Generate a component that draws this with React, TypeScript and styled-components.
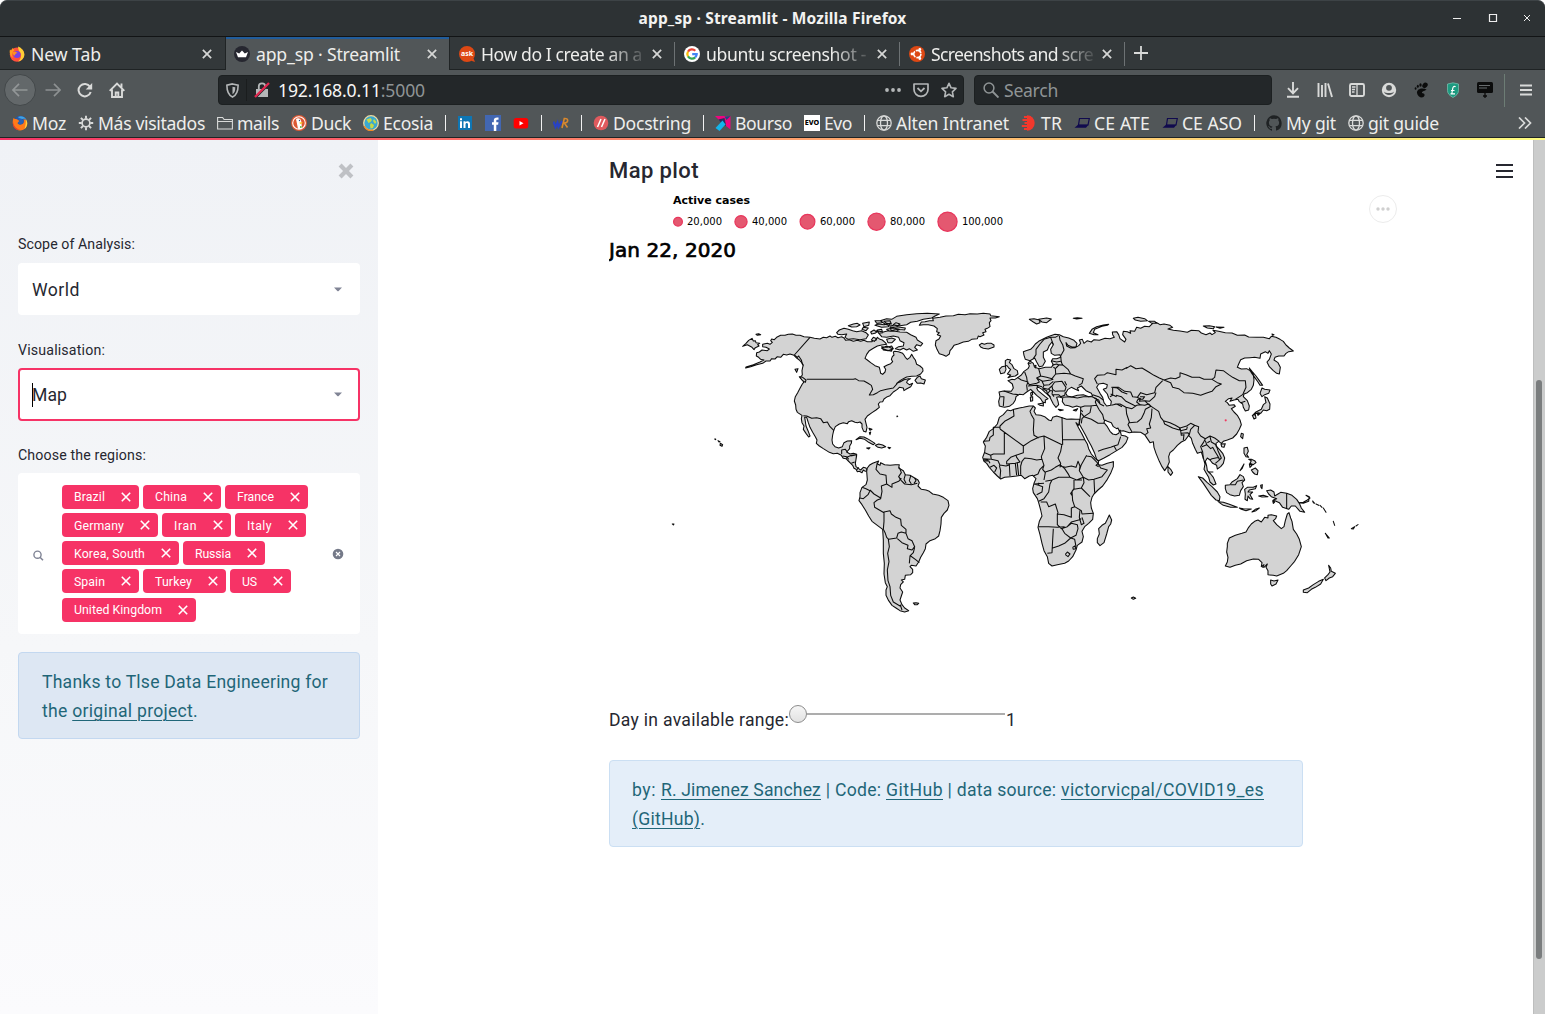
import React, { useLayoutEffect, useRef, useState } from "react";
import styled, { createGlobalStyle, css } from "styled-components";

const UI = `"Noto Sans", "Open Sans", sans-serif`;
const BODY = `Roboto, "Noto Sans", sans-serif`;

const GlobalStyle = createGlobalStyle`
  * { box-sizing: border-box; }
  body { margin: 0; overflow: hidden; background: #fff; }
  svg { display: block; flex: none; }
`;

/* ---------- text that settles on a set width ---------- */

const FitSpan = styled.span`
  display: inline-block;
  white-space: pre;
`;

function Fit({ w, children }: { w: number; children: React.ReactNode }) {
  const ref = useRef<HTMLSpanElement>(null);
  const [spacing, setSpacing] = useState(0);
  useLayoutEffect(() => {
    const el = ref.current;
    if (!el) return;
    const count = (el.textContent || " ").length;
    setSpacing((w - el.getBoundingClientRect().width) / count);
  }, [w]);
  return (
    <FitSpan ref={ref} style={{ letterSpacing: `${spacing}px` }}>
      {children}
    </FitSpan>
  );
}

/* ---------- window chrome ---------- */

const Window = styled.div`
  width: 1545px;
  height: 1014px;
  display: flex;
  flex-direction: column;
  overflow: hidden;
  background: #fff;
`;

const TitleBar = styled.header`
  height: 37px;
  flex: none;
  display: grid;
  grid-template-columns: 1fr auto 1fr;
  align-items: center;
  background: #2d3234;
  border-top: 1px solid #3d4346;
  border-bottom: 1px solid #121415;
  border-radius: 7px 7px 0 0;
  color: #f3f3f1;
  font: 700 15.5px/30px ${UI};
  padding-bottom: 2px;
`;

const WindowButtons = styled.div`
  display: flex;
  justify-content: flex-end;
  gap: 22px;
  padding: 0 12px 0 0;
  margin-top: 1px;
`;

const TabStrip = styled.nav`
  height: 33px;
  flex: none;
  display: flex;
  background: #33383a;
  border-bottom: 1px solid #1f2324;
`;

const TabBox = styled.div<{ $active?: boolean; $line?: boolean }>`
  position: relative;
  width: 225px;
  height: 32px;
  display: flex;
  align-items: center;
  padding: 1px 12px 0 9px;
  color: #eeeeec;
  font: 17.6px ${UI};
  ${(p) =>
    p.$active &&
    css`
      height: 33px;
      background: #515658;
      border-left: 1px solid #202425;
      border-right: 1px solid #202425;
      box-shadow: inset 0 2px 0 #215d9c;
      padding-left: 8px;
      padding-right: 11px;
    `}
  ${(p) =>
    p.$line &&
    css`
      &::after {
        content: "";
        position: absolute;
        right: 0;
        top: 5px;
        width: 1px;
        height: 24px;
        background: #6d7274;
      }
    `}
`;

const TabLabel = styled.div<{ $fade?: boolean }>`
  width: 163px;
  margin-left: 6px;
  overflow: hidden;
  white-space: nowrap;
  line-height: 28px;
  ${(p) =>
    p.$fade &&
    css`
      mask-image: linear-gradient(90deg, #000 125px, transparent 168px);
    `}
`;

const TabClose = styled.span`
  margin-left: 8px;
  display: flex;
`;

const NewTab = styled.div`
  display: flex;
  align-items: center;
  padding-left: 9px;
`;

const Toolbar = styled.div`
  height: 40px;
  flex: none;
  display: flex;
  align-items: center;
  background: #515658;
  padding-left: 4px;
`;

const Back = styled.div`
  width: 32px;
  height: 32px;
  border-radius: 50%;
  border: 1px solid #43484a;
  background: #63686a;
  display: grid;
  place-items: center;
`;

const NavIcons = styled.div`
  display: flex;
  gap: 16px;
  margin-left: 9px;
  width: 173px;
`;

const Field = styled.div<{ $w: number }>`
  width: ${(p) => p.$w}px;
  height: 30px;
  display: flex;
  align-items: center;
  border-radius: 4px;
  border: 1px solid #1c2021;
  background: #232729;
  color: #8f9495;
  font: 17.6px/26px ${UI};
  & + & {
    margin-left: 10px;
  }
`;

const Shield = styled.div`
  width: 28px;
  height: 22px;
  border-right: 1px solid #1a1d1e;
  display: grid;
  place-items: center;
`;

const Lock = styled.div`
  margin: 0 8px 0 7px;
`;

const Address = styled.div`
  flex: 1;
  b {
    font-weight: 400;
    color: #f6f6f5;
  }
`;

const FieldIcons = styled.div`
  display: flex;
  gap: 12px;
  align-items: center;
  padding-right: 6px;
`;

const SearchGlyph = styled.div`
  margin: 0 5px 0 8px;
`;

const Extensions = styled.div`
  display: flex;
  gap: 16px;
  align-items: center;
  margin-left: 13px;
  width: 219px;
`;

const Divider = styled.div`
  width: 1px;
  height: 33px;
  background: #6d7d75;
`;

const MenuSlot = styled.div`
  margin-left: 14px;
`;

const Bookmarks = styled.div`
  height: 28px;
  flex: none;
  display: flex;
  align-items: center;
  gap: 12px;
  padding: 0 13px 2px 12px;
  background: #515658;
  border-bottom: 1px solid #202425;
  color: #eeeeec;
  font: 17.6px ${UI};
`;

const Bookmark = styled.div<{ $w: number }>`
  width: ${(p) => p.$w}px;
  flex: none;
  display: flex;
  align-items: center;
  gap: 4px;
  white-space: nowrap;
  line-height: 24px;
`;

const Bar = styled.i`
  width: 1px;
  height: 16px;
  margin-right: -1px;
  background: #f2f2f2;
`;

const Overflow = styled.div`
  margin-left: auto;
`;

const Rainbow = styled.div`
  height: 2px;
  flex: none;
  background: linear-gradient(90deg, #f63366, #ff7468 33%, #ffb46e 60%, #fffd80);
`;

/* ---------- page ---------- */

const Page = styled.div`
  flex: 1;
  display: flex;
  min-height: 0;
  color: #262730;
  font: 17.6px ${BODY};
`;

const Sidebar = styled.aside`
  width: 378px;
  flex: none;
  padding: 0 18px;
  background: linear-gradient(180deg, #f0f2f6, #f6f7f9 58%, #fbfbfd);
`;

const CloseRow = styled.div`
  display: flex;
  justify-content: flex-end;
  height: 94px;
  padding: 23px 6px 0 0;
`;

const Label = styled.div<{ $top?: number }>`
  height: 20px;
  line-height: 20px;
  margin-top: ${(p) => p.$top ?? 0}px;
  font-size: 14.2px;
`;

const Select = styled.div<{ $focus?: boolean; $top: number }>`
  height: ${(p) => (p.$focus ? 53 : 52)}px;
  margin-top: ${(p) => p.$top}px;
  padding: 0 ${(p) => (p.$focus ? 16 : 18)}px 0 ${(p) => (p.$focus ? 12 : 14)}px;
  display: flex;
  align-items: center;
  justify-content: space-between;
  background: #fff;
  border-radius: 4px;
  border: ${(p) => (p.$focus ? "2px solid #f63366" : "0")};
`;

const Value = styled.span<{ $caret?: boolean }>`
  line-height: 24px;
  padding-top: ${(p) => (p.$caret ? 0 : 2)}px;
  box-shadow: ${(p) => (p.$caret ? "inset 1px 0 0 #000" : "none")};
`;

const Multi = styled.div`
  height: 161px;
  margin-top: 8px;
  display: flex;
  align-items: center;
  background: #fff;
  border-radius: 4px;
  padding: 0 16px 0 15px;
`;

const SearchSlot = styled.div`
  padding-top: 4px;
`;

const Tags = styled.div`
  width: 256px;
  margin-left: 18px;
  padding-bottom: 0.6px;
  display: flex;
  flex-wrap: wrap;
  gap: 4.2px 4px;
`;

const Tag = styled.div<{ $w: number }>`
  width: ${(p) => p.$w}px;
  height: 24px;
  padding: 0 8px 0 12px;
  display: flex;
  align-items: center;
  justify-content: space-between;
  border-radius: 4px;
  background: #f63366;
  color: #fff;
  font-size: 12.3px;
  line-height: 22px;
  & > span {
    padding-top: 1px;
  }
`;

const ClearSlot = styled.div`
  margin-left: auto;
`;

const Info = styled.div<{ $top: number; $side?: boolean }>`
  height: 87px;
  margin-top: ${(p) => p.$top}px;
  padding: 15px 22px 13px ${(p) => (p.$side ? 23 : 22)}px;
  border: 1px solid ${(p) => (p.$side ? "#c3d8f0" : "#cbdff3")};
  border-radius: 4px;
  background: ${(p) => (p.$side ? "#dde7f3" : "#e4eef9")};
  color: #1f6678;
  line-height: 29px;
  a {
    color: inherit;
    text-decoration: underline;
    text-decoration-thickness: 1px;
    text-underline-offset: 3px;
  }
`;

const Line = styled.div`
  height: 29px;
`;

const Main = styled.main`
  position: relative;
  flex: 1;
  padding-left: 231px;
`;

const Heading = styled.h3`
  height: 50px;
  margin: 0;
  padding-top: 16px;
  line-height: 30px;
  font-size: 22px;
  font-weight: 500;
`;

const PageMenu = styled.div`
  position: absolute;
  left: 1118px;
  top: 23px;
`;

const ChartMenu = styled.div`
  position: absolute;
  left: 991px;
  top: 55px;
  width: 28px;
  height: 28px;
  border: 1px solid #ececec;
  border-radius: 50%;
  display: grid;
  place-items: center;
`;

const SliderRow = styled.div`
  display: flex;
  align-items: center;
  height: 24px;
  margin-top: 28px;
`;

const Track = styled.div`
  width: 217px;
  height: 20px;
  margin-top: -13px;
  display: flex;
  align-items: center;
  &::after {
    content: "";
    flex: 1;
    height: 2px;
    margin-right: 1px;
    background: #adadad;
  }
`;

const Thumb = styled.i`
  width: 18px;
  height: 18px;
  border-radius: 50%;
  border: 1px solid #8c8c8c;
  background: linear-gradient(#f6f6f6, #e2e2e2);
`;

const Content = styled.div`
  width: 694px;
`;

const Scroll = styled.div`
  width: 12px;
  flex: none;
  padding: 240px 0 0 2px;
  background: #cbcccc;
  border-left: 1px solid #bdbebe;
`;

const ScrollThumb = styled.div`
  width: 6px;
  height: 579px;
  border-radius: 3px;
  background: #7a7d7e;
`;

/* ---------- icons ---------- */

const Cross = ({ size, sw, color }: { size: number; sw: number; color: string }) => (
  <svg width={size} height={size} viewBox={`0 0 ${size} ${size}`} stroke={color} strokeWidth={sw}>
    <path d={`M${sw / 2} ${sw / 2}L${size - sw / 2} ${size - sw / 2}M${size - sw / 2} ${sw / 2}L${sw / 2} ${size - sw / 2}`} />
  </svg>
);

const Ic = ({ children, s = 16 }: { children: React.ReactNode; s?: number }) => (
  <svg width={s} height={s} viewBox="0 0 16 16" fill="none">
    {children}
  </svg>
);

const light = "#d9dad9";

const FirefoxIcon = () => (
  <Ic>
    <circle cx="8" cy="8.6" r="7.2" fill="#ff4f3d" />
    <path d="M9 .5c3 1 6.5 4 6.4 8.2-.3 4-3.5 6.5-6.6 6.8C13 13 13 7 10 5 9.5 3.500 9 2 9 .5z" fill="#ffcf36" />
    <path d="M1 3.500l1.200 1L3.500 2l2 2C3 6 2.500 9 4 12 1.500 10.500 0 7 1 3.500z" fill="#ff9a1f" />
    <circle cx="8" cy="8.500" r="3.500" fill="#7542e5" />
    <path d="M3.500 6.500c2-1.500 4-.8 5 .6-1.500.2-2.500 1-2.500 2.400-1.500-.2-2.500-1.500-2.500-3z" fill="#ff9320" />
  </Ic>
);

const OldFirefoxIcon = () => (
  <Ic>
    <circle cx="8.500" cy="7.500" r="6.800" fill="#2458a8" />
    <path d="M6 2c3-1.500 6-.5 8 2-3-.8-4 .5-6 .2z" fill="#3fa3e4" />
    <path d="M1.500 3c1 1 2 1 3.500 1.300L7.500 6 5.500 8c1 2.500 4.500 2 6 0 .6-1 .4-3 0-4 4 1 5 5 2.500 8.500-3 4-9.500 4-12-.5C.3 9 .5 5.500 1.500 3z" fill="#ff7a1a" />
    <path d="M6 3.500c2.500-1 5 .5 5.200 2.500.2 2-1.700 3.600-3.600 3.300C5.500 9 6 7 7.500 6z" fill="#2b62b5" />
    <path d="M13.500 3.500c2.500 3 2.300 8-1 10.500 1-3 1.800-7 1-10.500z" fill="#ffd23b" />
    <path d="M1 6c0 4 2.500 8 7 8.500-4 1.500-8-2-7-8.500z" fill="#e33b2e" />
  </Ic>
);

const StreamlitIcon = () => (
  <Ic>
    <circle cx="8" cy="8" r="8" fill="#262730" />
    <path d="M2 6l3.200 1.500L8 4.500l2.800 3L14 6l-2 5.300H4z" fill="#fff" />
  </Ic>
);

const askText = { fontFamily: "Noto Sans", fontWeight: 700 };

const AskIcon = () => (
  <Ic>
    <path d="M8 0a8 8 0 108 8A8 8 0 008 0zM10 14l6 2-2-5z" fill="#dd4814" />
    <text x="8" y="10.400" fontSize="7" textAnchor="middle" fill="#fff" style={askText}>ask</text>
  </Ic>
);

const GoogleIcon = () => (
  <Ic>
    <circle cx="8" cy="8" r="8" fill="#fff" />
    <g strokeWidth="2.200">
      <path d="M11.300 4.700A4.700 4.700 0 004 5.600" stroke="#ea4335" />
      <path d="M4 5.600a4.700 4.700 0 000 4.800" stroke="#fbbc05" />
      <path d="M4 10.400a4.700 4.700 0 007.200 1" stroke="#34a853" />
      <path d="M11.200 11.400A4.600 4.600 0 0012.700 8.200H8.200" stroke="#4285f4" />
    </g>
  </Ic>
);

const UbuntuIcon = () => (
  <Ic>
    <circle cx="8" cy="8" r="8" fill="#dd4814" />
    <circle cx="8.300" cy="8" r="3.600" stroke="#fff" strokeWidth="1.600" strokeDasharray="6.500 1" />
    <g fill="#fff">
      <circle cx="3" cy="8" r="1.400" />
      <circle cx="10.800" cy="3.500" r="1.400" />
      <circle cx="10.800" cy="12.500" r="1.400" />
    </g>
  </Ic>
);

const Globe = () => (
  <Ic>
    <g stroke={light} strokeWidth="1.300">
      <circle cx="8" cy="8" r="7.200" />
      <ellipse cx="8" cy="8" rx="3.500" ry="7.200" />
      <path d="M1.500 5.300h13M1.500 10.700h13" />
    </g>
  </Ic>
);

const Gear = () => (
  <Ic>
    <circle cx="8" cy="8" r="3.900" stroke={light} strokeWidth="1.700" />
    <path d="M8 .8v3M8 12.200v3M.8 8h3M12.200 8h3M2.900 2.900L5 5M11 11l2.100 2.100M2.900 13.100L5 11M11 5l2.100-2.100" stroke={light} strokeWidth="1.900" />
  </Ic>
);

const Folder = () => (
  <Ic>
    <path d="M.6 14V2.500h5l1.500 2h8.300V14z M.6 6.500h14.800" stroke={light} strokeWidth="1.100" />
  </Ic>
);

const Duck = () => (
  <Ic>
    <circle cx="8" cy="8" r="8" fill="#de5833" />
    <circle cx="8" cy="8" r="6.300" stroke="#fff" strokeWidth="1.100" />
    <path d="M5 4c2-1.500 5-.5 5.300 2.500L11 13.500c-1.500.8-3 .6-4 .3z" fill="#fff" />
    <path d="M8.500 7.300l4 .4-3.500 1.400z" fill="#fdd20a" />
    <path d="M9 11l3 1-3 1z" fill="#4cba3c" />
    <circle cx="8.500" cy="5.500" r=".7" fill="#2d4f8e" />
  </Ic>
);

const Ecosia = () => (
  <Ic>
    <circle cx="8" cy="8" r="7.300" fill="#3aa9d0" stroke="#ecd9a0" strokeWidth="1.300" />
    <path d="M3.500 4.500L7.500 3 9 5 7.500 7l-2 1zM8 8l3 2-1 3-2.500.5L7 10zM11 4l2.500 3-1.500 2-2-3z" fill="#c5d94a" />
    <path d="M1.200 11a7.300 7.300 0 009 4" stroke="#f08a24" strokeWidth="1.500" />
  </Ic>
);

const LinkedIn = () => (
  <Ic>
    <path d="M1 1h14v14H1z" fill="#0e76b4" />
    <path d="M3 6.300h2V13H3zM3 3.300h2v2H3zM6.500 6.300h2v1c1-1.700 4.500-1.500 4.500 1.500V13h-2V9.500c0-2-2.500-2-2.500 0V13h-2z" fill="#fff" />
  </Ic>
);

const Facebook = () => (
  <Ic>
    <path d="M0 0h16v16H0z" fill="#4267b2" />
    <path d="M8.800 16V9.800H7V7.300h1.800V5.500c0-2.300 1.400-3.300 4.700-2.900v2.200c-1.800-.2-2.200.1-2.200 1v1.500h2.200l-.4 2.500h-1.800V16z" fill="#fff" />
  </Ic>
);

const YouTube = () => (
  <Ic>
    <rect x=".7" y="3" width="14.500" height="10.500" rx="2.500" fill="#f00" />
    <path d="M6.500 6v4.500l4-2.250z" fill="#fff" />
  </Ic>
);

const WordRef = () => (
  <Ic>
    <path d="M.5 6.500l2 5.500 2-4.500 1 4.500 3.500-6" stroke="#2842c4" strokeWidth="2.100" />
    <path d="M9 13l2.300-9.500c4.500-.5 4.500 4 0 4.500l3.200 4.500" stroke="#d9882e" strokeWidth="1.600" />
  </Ic>
);

const Docs = () => (
  <Ic>
    <circle cx="8" cy="8" r="7.300" fill="#e05a5e" />
    <path d="M4.500 12L8 4M8.500 12L12 4" stroke="#fff" strokeWidth="1.500" />
  </Ic>
);

const BoursoIcon = () => (
  <Ic>
    <path d="M0 1h15.500L9 7 3.500 4.500z" fill="#f0047f" />
    <path d="M15.500 1v13.500L11 11l-1-5z" fill="#f0047f" />
    <path d="M3.500 4.500L9.500 3l1.500 8-3-1z" fill="#24325f" />
    <path d="M9.500 1.500l6-.5-4 4z" fill="#24467f" />
    <path d="M.5 13L7.500 5.500l3 4L4.500 16z" fill="#13b5ea" />
  </Ic>
);

const EvoIcon = () => (
  <Ic>
    <path d="M0 0h16v16H0z" fill="#fff" />
    <text x="8" y="10.300" fontSize="6.300" textAnchor="middle" textLength="14.500" lengthAdjust="spacingAndGlyphs" fill="#000" style={{ fontFamily: "Noto Sans", fontWeight: 800 }}>EVO</text>
  </Ic>
);

const TrIcon = () => (
  <Ic>
    <path d="M6 .3a7.700 7.700 0 110 15.400z" fill="#f2382c" />
    <path d="M3 2h7M1.500 5h7M3.500 8h6M.8 11h8M3 14h6" stroke="#f2382c" strokeWidth="1.800" />
  </Ic>
);

const Laptop = () => (
  <Ic>
    <path d="M5.500 3.500h9.800L14 10H4.500z" stroke="#100a4e" strokeWidth="1.200" />
    <path d="M4 9.800h10.500l-2.500 3H.5z" fill="#100a4e" />
  </Ic>
);

const GitHub = () => (
  <Ic>
    <path fill="#1f2224" d="M8 .2a8 8 0 00-2.500 15.500c.4.1.5-.2.500-.4v-1.500c-2.200.5-2.700-1-2.700-1-.4-.9-.9-1.200-.9-1.200-.7-.5.1-.5.1-.5.8.1 1.200.8 1.200.8.7 1.200 1.900.9 2.300.7.100-.5.300-.9.500-1.100C4.700 11.300 2.900 10.600 2.900 7.500c0-.9.300-1.600.8-2.100-.1-.2-.4-1 .1-2.100 0 0 .7-.2 2.200.8a7.500 7.500 0 014 0c1.500-1 2.200-.8 2.200-.8.4 1.100.2 1.900.1 2.100.5.600.8 1.300.8 2.100 0 3.100-1.900 3.700-3.700 3.900.3.300.6.800.6 1.500v2.300c0 .2.100.5.600.4A8 8 0 008 .2z" />
  </Ic>
);

/* ---------- map data ---------- */

type Sheet = [number, number];
// The atlas is kept as sheets; each one has its own origin in thirds of a pixel.
const NW: Sheet = [0, 0];
const ATL: Sheet = [690, 0];
const ASIA: Sheet = [1350, 0];
const SAM: Sheet = [540, 450];
const OCE: Sheet = [1350, 450];
const AFR: Sheet = [930, 240];

type Part = [Sheet, string];

const trace = (...parts: Part[]) =>
  "M" +
  parts
    .flatMap(([[ox, oy], pts]) =>
      pts.trim().split(/\s+/).map((p) => {
        const [x, y] = p.split(",").map(Number);
        return `${x + ox} ${y + oy}`;
      })
    )
    .join("L");

const many = (sheet: Sheet, list: string) =>
  list.split(";").map((s) => trace([sheet, s])).join("");
const manyClosed = (sheet: Sheet, list: string) =>
  list.split(";").map((s) => trace([sheet, s]) + "Z").join("");

const northAmerica = trace(
  [NW, `335,117 343,119 350,112 362,106 375,106 385,103 397,102 408,106 420,106 432,110 450,112 463,115 480,117 490,112 500,113 510,108 516,112 526,109 534,113 545,110 552,114 557,121 568,119 580,124 592,121 602,124 612,121 622,125 636,125 640,119 648,121 652,112 660,118 667,120 676,128 680,133 665,135 652,138 640,145 628,152 620,163 615,175 622,180 632,188 645,197 658,202 660,210 662,220 668,223 675,216 677,208 672,200 682,195 692,191 698,185 694,178 697,170 702,165 700,156`],
  [ATL, `14,154 25,155 38,160 42,165 46,172 52,178 60,172 65,163 70,172 76,180 80,193 90,198 98,205 99,213 92,222 80,228 65,229 50,231 40,236 30,242 20,250 30,246 42,239 55,236 62,236 52,242 50,248 58,254 68,250 62,260 48,268 42,272 40,264 28,262 22,268 10,276 0,287`],
  [NW, `682,290 672,297 668,305 660,306 655,312 658,322 648,330 636,338 622,348 615,358 618,370 621,382 618,396 611,394 606,382 606,372 600,366 592,368 585,367 575,362 566,365 562,371 550,368 538,372 526,380 521,392 518,405 516,420 518,432 525,440 536,444 547,440 552,428 562,423 575,422 574,430 569,438 569,446 560,456 570,462 580,460 590,463 588,478`],
  [SAM, `50,17 48,28 46,40 48,50 56,56 62,60 70,52 78,54 82,62 76,64 70,60 66,68 58,64 52,65 48,58 42,55 38,46 32,40 25,33 18,26 10,25 4,16`],
  [NW, `532,460 520,461 508,457 490,446 478,438 469,430 471,420 466,410 458,397 450,382 445,368 440,352 434,352 436,364 438,378 444,392 450,408 446,411 438,400 430,388 432,378 426,368 424,356 426,346 412,337 408,328 407,315 403,303 406,290 413,278 420,265 427,252 431,247 428,240 420,233 427,225 426,212 428,202 430,195 425,188 418,180 410,174 402,166 390,162 380,165 370,163 362,172 352,170 345,177 335,176 330,183 318,183 308,190 290,194 272,200 257,204 258,201 280,194 300,186 312,180 302,178 296,172 289,168 290,158 298,156 306,150 322,152 328,147 318,142 308,140 308,133 322,130 330,133 337,127 332,122`]
) + "Z";

const greenland = manyClosed(ATL, `88,76 94,66 105,65 118,62 130,62 128,55 150,52 168,48 190,47 205,43 225,44 240,41 262,42 280,40 300,42 302,47 328,50 316,54 300,54 303,62 298,68 300,80 292,85 285,88 288,95 278,98 282,105 270,110 265,108 262,116 245,118 235,124 220,126 205,132 192,136 186,145 180,152 178,162 168,169 160,165 148,161 141,148 136,135 138,122 147,117 152,108 142,104 148,98 140,95 142,86 132,78 115,74 100,74;268,135 275,130 283,133 292,130 304,130 312,135 312,141 295,147 280,145 272,141`);

const arctic = manyClosed(NW, `530,98 538,90 552,85 565,88 578,92 590,95 605,92 618,98 625,105 618,116 600,119 580,116 565,118 555,112 560,102 545,104 534,103;565,77 580,72 592,70 600,75 590,80 575,81;608,70 628,66 626,76 612,80;610,82 625,84 618,92 606,88;645,62 665,62 666,68 650,70;645,76 655,72 672,74 690,70 685,80 665,82;672,64 690,62 694,72 680,70;632,96 642,90 650,96 645,100 635,102;652,90 665,88 668,98 656,100;640,112 650,116 643,124 634,120;680,88 700,84 718,88 710,94 690,94;700,74 712,78 720,72 708,68;665,145 680,138 698,146 694,154 680,150;405,208 414,206 410,217;418,230 428,232 438,240 436,247 427,241;288,103 296,101 302,104 292,106;248,139 258,130 266,121 276,115 280,123 286,122 288,128 299,130 293,134 297,138 286,143 282,149 276,142 262,134`)
  + manyClosed(ATL, `-30,62 -10,56 5,58 20,49 50,44 80,41 112,40 148,42 135,48 125,54 100,58 82,64 62,67 50,74 30,77 15,75 0,78 -15,72;0,82 20,80 46,84 44,90 20,88 4,92;-40,92 -20,96 -5,92 15,94 30,96 50,97 62,104 78,112 82,120 98,130 92,138 80,134 74,142 82,150 70,154 58,146 50,150 40,145 30,150 16,146 26,140 40,138 42,128 30,122 26,112 10,108 -10,112 -25,110;-10,118 5,114 16,118 6,128 -6,128;-25,140 -8,142 5,138 10,146 -6,152 -20,150;75,241 82,232 90,228 94,236 106,240 102,252 92,249 82,250`);

const islands = manyClosed(NW, `588,419 600,410 612,411 622,416 632,422 645,430 640,434 626,427 614,418 600,415;646,436 656,432 668,435 677,440 665,444 654,442;620,444 630,443 626,447;684,442 692,443 688,446;627,385 636,388 630,391;628,398 632,396 630,404;164,417 167,417 167,419;174,422 180,425 177,426;181,430 188,434 186,439 180,436;711,348 713,349 711,350`)
  + manyClosed(SAM, `220,459 228,458 236,460 232,464 224,464;874,444 880,441 887,445 880,448;-503,222 -498,222 -500,225`);

const eurasia = trace(
  [ATL, `400,155 408,152 422,148 430,140 436,132 446,124 458,118 470,112 482,107 495,103 508,104 520,110 536,114 552,121 561,130 558,140 546,141 534,136 528,128 530,138 542,144 556,143 566,137 572,130 568,120 577,118 582,130 592,122 604,126 612,119 628,121 645,115 660,116 673,112 668,104 667,96 680,95 686,104 690,116 704,126 708,118 698,104 700,94 712,95 722,100`],
  [ASIA, `60,92 74,94 80,82 92,85 104,79 118,80 128,70 142,69 150,74 162,72 180,76 188,82 174,87 190,91 210,93 232,97 244,91 266,92 274,99 288,104 300,99 306,104 316,98 309,91 326,94 346,98 366,99 382,106 404,105 416,111 440,112 460,112 478,116 484,109 498,112 510,118 520,124 528,135 538,144 550,153 536,155 528,160 522,168 506,168 495,172 492,180 504,188 511,202 508,222 500,220 490,212 478,200 471,186 478,178 484,162 478,152 474,160 466,155 452,162 450,175 434,172 420,173 404,174 392,179 386,192 382,202 394,207 410,206 420,212 430,224 432,240 430,256 424,268 412,278 402,282 400,290 412,302 418,318 416,330 406,333 400,322 398,312 388,305 384,298 372,300 360,304 366,294 356,296 346,304 352,308 358,316 372,314 376,319 364,326 372,336 382,346 390,360 394,374 388,388 380,402 368,414 352,420 340,424 334,430 326,424 318,430 318,438 328,448 338,460 344,474 340,490 332,500 322,507 320,496 308,490 300,480 292,474 286,484 290,498 292,512 302,522 310,532 318,552 310,555 300,546 296,532 288,518 282,508 285,492 280,474 274,456 262,460 256,448 248,430 244,415 236,406 226,420 214,426 202,436 190,450 180,458 176,470 178,486 172,500 164,512 156,500 148,484 138,460 132,442 130,425 120,428 112,416 104,404 92,397 72,396 58,398 40,392 28,394 24,384`],
  [ATL, `680,386 670,380 664,368 652,364 644,360 642,368 652,380 660,394 668,402 678,404 686,400 690,390 694,406 706,408 714,413 708,428 696,442 680,452 660,464 642,474 626,482 620,478 614,460 604,438 594,420 586,404 576,386 568,372 570,358 572,338 572,322 560,318 548,322 536,317 524,315 517,305 518,294 506,290 500,292 504,304 506,314 498,322 490,312 484,300 478,288 466,278 456,268 446,262 440,264 444,272 454,280 466,290 474,296 466,300 466,308 458,306 452,296 440,286 430,276 422,268 410,276 400,284 388,283 378,290 376,300 370,310 358,319 344,322 336,320 328,318 326,304 330,290 327,276 340,273 364,274 370,264 367,252 354,242 366,238 374,239 384,232 394,225 402,214 414,206 418,198 414,190 420,183 430,190 434,202 448,206 466,202 484,202 490,194 484,184 488,176 500,176 512,172 510,164 494,166 484,160 482,148 490,134 486,126 478,136 472,150 460,156 460,172 466,184 458,198 448,200 440,186 434,174 420,182 406,178 402,166`]
) + "Z";

const seas = manyClosed(ATL, `527,280 534,268 544,262 556,268 566,272 562,264 574,258 580,264 588,272 604,280 608,288 596,290 580,284 562,286 545,291 532,288;620,262 626,252 640,250 652,254 650,264 640,268 652,282 656,294 664,304 662,316 650,318 642,308 638,292 630,280`);

const africa = trace([AFR, `112,90 122,92 132,88 148,84 160,82 178,78 190,78 196,84 192,94 198,104 212,106 224,110 236,120 244,122 248,112 260,108 272,112 290,118 304,117 318,118 329,118 326,136 318,128 326,144 336,162 345,180 352,192 356,206 364,222 376,236 386,244 384,254 396,256 412,250 430,245 430,260 422,280 412,298 398,318 384,330 372,342 366,352 362,368 364,384 370,400 368,418 356,430 344,440 336,454 340,470 336,486 322,496 318,510 308,530 296,543 284,550 262,554 246,558 236,550 232,530 222,512 216,490 210,464 204,442 208,424 216,408 212,390 206,368 202,356 190,338 188,326 192,310 198,296 188,286 178,288 164,296 154,286 140,288 122,290 104,292 92,297 82,288 70,276 58,262 50,250 42,244 38,232 44,216 46,198 40,186 50,172 58,154 70,146 82,132 88,112 100,104`]) + "Z";

const madagascar = manyClosed(AFR, `418,405 425,420 422,432 416,440 410,462 402,488 390,497 382,488 382,476 388,462 386,446 396,436 406,430 412,418`);

const southAmerica = trace([SAM, `80,64 82,54 88,46 98,40 108,36 116,33 112,42 120,46 122,38 134,44 150,46 166,44 178,44 176,54 190,62 196,74 210,76 224,84 234,90 238,98 234,108 244,118 258,120 268,124 278,132 296,136 310,142 324,152 327,166 322,180 312,190 304,202 303,222 300,242 296,258 286,266 270,272 258,282 256,296 250,308 242,322 236,336 228,348 214,346 210,350 218,358 218,368 212,374 196,376 194,388 184,390 190,396 182,404 180,414 188,426 184,438 180,450 186,464 194,474 206,482 194,486 180,482 168,474 156,466 146,452 138,436 138,420 142,410 136,398 132,372 133,340 130,310 130,270 128,238 112,226 96,214 86,198 76,180 66,164 57,152 60,140 60,128 66,112 78,104 82,90`]) + "Z";

const europeIsles = manyClosed(ATL, `346,182 352,178 362,180 358,188 366,194 372,206 382,212 384,222 376,228 362,230 354,233 362,225 352,222 358,214 362,208 356,204 352,198 346,196;328,208 336,200 346,198 348,208 344,218 332,221;422,279 427,276 428,284 423,288;421,292 428,290 428,302 422,304;444,312 460,309 460,318 450,316;505,328 520,330 510,332;550,331 563,326 558,333;418,58 432,56 448,60 450,68 440,72 430,66;446,58 470,54 484,57 470,68 456,66;550,55 562,53 576,55 560,57;656,73 640,75 620,80 606,88 598,100 612,104 624,104 610,98 614,88 636,79 652,76;432,198 438,196 437,204`);

const asiaIsles = manyClosed(ASIA, `70,55 84,52 104,56 112,62 92,64 76,60;116,64 134,64 142,70 126,70;280,78 298,77 314,80 310,86 292,84;318,81 342,82 330,85;486,102 492,104 488,106;418,204 426,214 438,228 448,242 458,256 450,256 444,246 434,232 424,218;456,264 464,268 480,270 476,280 464,284 456,290 450,280;464,290 472,294 480,312 479,328 470,332 460,330 452,340 444,338 430,344 438,336 454,328 460,314 468,308;427,346 436,344 438,354 432,357;442,341 450,341 444,346;394,400 400,402 398,416 392,410;333,432 346,431 342,442 335,440;174,500 182,508 188,518 182,526 174,516;402,444 412,442 415,454 410,464 416,472 408,470 402,460;416,478 424,482 420,490 430,494 438,488 434,482 424,478;418,492 426,496 420,502;424,510 436,504 444,512 442,524 434,522 428,516;390,512 402,492 396,506;0,490 10,486 4,508 -4,522`);

const oceania = manyClosed(OCE, `265,80 278,84 292,98 306,110 322,126 330,140 328,152 318,150 304,136 292,118 280,100;324,155 340,157 356,162 382,172 362,172 340,166;388,174 400,176 424,177 408,182 394,178;426,186 436,178 448,174 438,182;346,106 360,104 366,96 382,86 390,74 400,80 404,90 396,98 400,110 392,122 388,136 374,138 360,134 350,128 346,116;404,118 412,112 430,112 440,107 436,116 418,120 414,126 428,126 420,134 428,148 420,146 414,138 412,152 405,148 406,132;452,106 457,104 456,116 453,112;446,138 460,136 474,140 456,141;488,152 494,156 490,160;470,122 482,120 492,126 494,138 504,132 512,127 530,130 546,136 560,148 568,160 574,174 584,187 570,184 556,168 544,168 536,178 518,172 508,158 490,150 500,146 484,140 476,132;566,158 580,157 592,150 600,144 588,136 598,140 596,154 580,160;608,153 614,160 610,158;618,162 626,166;630,166 636,172;640,174 648,187;670,214 674,226;646,250 658,264 654,264;724,236 734,230 730,237;738,228 744,224;474,196 484,194 500,198 497,206 490,212 500,224 514,236 522,230 526,212 532,192 537,188 542,204 546,214 550,238 560,252 568,268 574,290 566,314 554,334 542,348 530,362 520,370 500,378 490,376 474,374 474,362 468,352 472,342 462,352 458,352 462,344 454,350 456,338 446,328 430,327 410,332 392,342 376,346 360,352 346,348 352,336 354,322 350,306 352,290 352,280 358,264 376,256 396,250 408,246 416,232 424,222 434,214 444,210 454,216 464,202 474,204;482,390 492,393 504,390 498,402 486,408 482,402;656,346 662,354 664,364 676,370 668,380 658,384 648,392 644,384 654,374 660,366;640,388 632,402 616,412 604,418 592,428 580,427 580,420 596,414 610,404 626,394`);

const borders = [
  many(NW, `450,112 403,165;403,165 412,172 416,168 424,180 428,196;440,238 580,238 586,236 596,242 612,243 624,250 634,256 638,268 628,285 640,284 652,278 662,272 680,268 700,264 712,250;430,347 440,348 455,355 470,353 482,356 490,368 502,366 510,380 522,392;545,462 545,450 556,448 562,456;548,468 560,470 566,478;572,468 590,464`),
  many(SAM, `18,26 24,20 34,16 48,14;34,40 44,36;50,60 56,52;145,268 148,290 143,310 147,335 142,360 144,392 150,410 152,436 160,456 180,468 184,464;182,468 186,480;130,238 136,250 140,262 146,268 170,264 174,250 184,246 198,250 198,238 184,226 182,208 168,202 154,192 150,182 132,186 132,214 130,238;198,250 204,266 216,272 224,290 216,300 202,296 204,286 186,278 172,266;224,292 220,308 210,318 208,340;212,318 226,328 238,338;132,188 118,180 104,172 102,158 112,150 122,146 126,124 124,108 140,102 156,112 156,102 176,94 184,84;112,38 108,58 120,72 138,76 140,102;178,52 184,68 176,80 184,92 194,102 214,104 232,100;196,74 192,88 198,100;212,78 208,92 214,102;224,84 228,92 222,100;66,112 78,116 90,122 84,134 70,146 60,144;90,120 102,132 122,144`),
  many(AFR, `130,88 132,108 118,116 104,124 90,138 90,147;90,142 70,142 70,165 60,172 58,182 40,184;90,147 160,198;103,157 103,222 70,222 62,226 44,218;190,78 180,94 184,104 192,118 190,150 192,166 206,174;160,198 184,182 206,172;206,172 222,168 276,194;276,112 278,194;278,179 345,179;276,192 272,214 264,234 272,250 270,262;222,170 224,206 214,230 216,240;216,238 200,240 184,236 164,234 156,244 152,258 152,284;160,198 160,218 138,226;138,226 122,232 110,244 110,252 136,250 150,246 140,232 138,226;118,252 120,288;136,250 140,286;142,250 146,286;90,255 108,258 120,254;88,256 92,272 90,294;62,226 64,238 84,242 90,256;40,236 62,238;42,244 56,242 60,250;60,262 72,256 80,264 74,276;40,240 54,239;216,238 222,256 210,268 204,282 190,288;222,256 218,268 226,278 222,300;192,312 222,310;226,276 244,270 256,262 270,254 284,266 296,284 300,292 266,292 246,300 226,304;270,258 286,262 304,258 318,262 324,244 330,258 328,272 340,292 320,300 300,292;350,226 342,240 334,254 328,272;350,228 364,230 384,250 392,264 412,270 396,290 372,298 356,300 340,292;384,250 378,256 386,260;340,292 342,308 334,324 360,350;372,298 374,338;314,300 336,300;334,324 312,328 312,300;246,300 240,312 236,336 222,356 206,364;212,366 230,366 236,380 256,372 264,398 262,402 282,404 304,412 304,384 314,380 308,362 306,334 312,326;310,330 302,340 306,346;314,380 334,392 336,402 370,400;262,402 262,434 274,446 292,440 304,426 326,420 334,416;330,390 328,412 334,434 342,430 336,412;205,440 236,440 262,442 284,440;250,446 248,480 246,518 232,520;276,446 284,460 302,474 284,490 266,498 248,504;292,440 304,430 322,434 324,446 318,466 302,474;302,474 314,478 318,500;192,312 206,316 206,308;206,316 218,320 216,336 200,344;308,502 314,498 318,506 310,508 308,502;286,523 292,516 300,522 294,530 286,524`),
  many(ATL, `331,290 342,290 340,318;342,273 368,282 386,284;382,232 394,240 414,246 410,256 412,272;404,216 410,232 412,246;412,246 418,254 440,250 448,246 440,234 452,228 446,206;496,204 497,222 486,236 470,232 452,228;440,234 458,244 482,240 490,238;456,244 462,256 478,254 490,244;462,256 458,264 474,268 486,258 494,246 516,244 528,262 524,274;486,258 488,268 496,274 524,272;414,258 440,256 456,260;440,256 444,262;458,266 470,272 472,282 480,272 476,266;480,272 488,272 486,282 492,290;486,284 506,284 512,290 524,286 526,276;472,282 482,292;498,222 522,220 542,222 556,228 580,236 576,250 566,256;498,204 508,194 520,196 534,208 542,222;484,182 500,186 512,184;486,196 500,192 508,196;490,202 498,206;508,108 510,120 518,134 522,150 512,168 514,186 518,196;430,176 438,164 438,148 450,132 462,118 482,112;482,112 490,134;482,112 496,112 506,106;414,190 424,190;524,244 530,256;518,292 540,290 562,294 580,290 606,290 620,296 616,306 620,316 600,318 584,318 572,322;608,284 626,290 640,300;612,294 626,300 630,310;620,316 628,330 638,344 642,360;604,318 600,338 582,350;574,340 582,350 576,356 574,370;582,350 604,358 624,370 642,370;574,330 578,336;642,318 630,312 620,300;624,454 640,448 662,442 672,438 684,434 692,410;672,438 680,452;622,252 614,236 622,226 644,224 652,218 678,224 678,208 696,210 712,202;664,262 682,264 696,276 712,282;662,282 680,290;664,316 680,312 696,320`),
  many(ASIA, `48,206 62,197 78,206 96,204 116,216 132,226 148,234 162,240;0,290 8,286 8,262 26,262 44,274 62,276 68,290 82,292 92,278 110,284 134,278 138,262 158,242;18,286 34,290 48,304 72,316 78,318;14,312 30,312 48,322 50,342 58,366 54,374 66,396;48,322 66,326 80,316 92,314 104,316 116,312 124,320;58,368 82,366 94,356 102,340 106,328 124,318;80,292 92,296 88,304 104,302 118,304 134,290 138,278;84,298 80,306 90,314;90,290 104,290 98,298 84,298;104,302 116,314 128,322 146,334 152,352 160,362 180,368 196,376 210,384 230,378 242,370 254,376 266,380 264,396 272,408 286,416 300,408 314,414 328,424;126,326 124,352 118,372 122,384 110,386 114,398 106,404;160,362 164,372 188,384 208,390 210,382;210,384 212,392 230,388 232,380;212,392 214,406 222,404 220,420;214,400 234,398 238,406;238,404 242,388 254,376;286,416 280,428 272,440 278,456 280,476;286,422 290,434 302,446 308,442 316,456 322,466 328,478;300,410 304,426 318,434 324,452 334,474 326,482 316,490;290,434 276,440;328,472 306,476 300,480;300,424 292,428;162,240 182,234 196,236 210,230 210,218 228,224 246,232 268,232 282,238 306,238 314,232 318,210 340,212 356,224 368,232 388,242 406,242 408,262 400,280 398,284 376,298;306,238 322,248 334,252 318,260 306,274 288,280 272,286 248,280 222,278 206,266 188,262 182,248 162,240;392,308 406,304`),
  many(OCE, `530,130 530,176;362,104 376,104 382,94 400,90;295,66 310,66`),
].join("");

const legend = [
  { cx: 678, r: 4.4, x: 687, label: "20,000", w: 35 },
  { cx: 741, r: 6.1, x: 752, label: "40,000", w: 35 },
  { cx: 807.5, r: 7.4, x: 820, label: "60,000", w: 35 },
  { cx: 876.5, r: 8.6, x: 890, label: "80,000", w: 35 },
  { cx: 947.5, r: 9.6, x: 962, label: "100,000", w: 41 },
];

const vega = { fontFamily: "DejaVu Sans, sans-serif" };

const WorldMap = () => (
  <svg width="788" height="490" viewBox="609 190 788 490">
    <text x="673" y="204" fontSize="11" fontWeight="700" textLength="77" style={vega}>Active cases</text>
    {legend.map((l) => (
      <g key={l.label}>
        <circle cx={l.cx} cy="221.700" r={l.r} fill="#e45870" stroke="#e8365c" strokeWidth="1.200" />
        <text x={l.x} y="225" fontSize="10" textLength={l.w} style={vega}>{l.label}</text>
      </g>
    ))}
    <text x="609" y="257" fontSize="20" stroke="#000" strokeWidth=".7" textLength="127" style={vega}>Jan 22, 2020</text>
    <g transform="translate(660 300) scale(.33333)" fill="#d3d3d3" stroke="#0c0c0c" strokeWidth="3.200" strokeLinejoin="round">
      <path d={northAmerica + greenland} />
      <path d={arctic + islands} />
      <path d={eurasia + europeIsles + asiaIsles} />
      <path d={africa + madagascar + southAmerica + oceania} />
      <path d={seas} fill="#fff" />
      <path d={borders} fill="none" />
    </g>
    <circle cx="1225.700" cy="420.300" r="1.100" fill="#f03a60" />
  </svg>
);

/* ---------- app ---------- */

const tabs = [
  { icon: <FirefoxIcon />, label: "New Tab", w: 70 },
  { icon: <StreamlitIcon />, label: "app_sp · Streamlit", w: 144, active: true },
  { icon: <AskIcon />, label: "How do I create an a", w: 161, fade: true, line: true },
  { icon: <GoogleIcon />, label: "ubuntu screenshot -", w: 160, fade: true, line: true },
  { icon: <UbuntuIcon />, label: "Screenshots and scre", w: 162, fade: true, line: true },
];

type Mark = { icon: React.ReactNode; label?: string; w: number } | null;

const marks: Mark[] = [
  { icon: <OldFirefoxIcon />, label: "Moz", w: 54 },
  { icon: <Gear />, label: "Más visitados", w: 127 },
  { icon: <Folder />, label: "mails", w: 62 },
  { icon: <Duck />, label: "Duck", w: 60 },
  { icon: <Ecosia />, label: "Ecosia", w: 70 },
  null,
  { icon: <LinkedIn />, w: 16 },
  { icon: <Facebook />, w: 16 },
  { icon: <YouTube />, w: 16 },
  null,
  { icon: <WordRef />, w: 16 },
  null,
  { icon: <Docs />, label: "Docstring", w: 98 },
  null,
  { icon: <BoursoIcon />, label: "Bourso", w: 77 },
  { icon: <EvoIcon />, label: "Evo", w: 48 },
  null,
  { icon: <Globe />, label: "Alten Intranet", w: 133 },
  { icon: <TrIcon />, label: "TR", w: 41 },
  { icon: <Laptop />, label: "CE ATE", w: 76 },
  { icon: <Laptop />, label: "CE ASO", w: 80 },
  null,
  { icon: <GitHub />, label: "My git", w: 70 },
  { icon: <Globe />, label: "git guide", w: 91 },
];

const regions: [string, number][] = [
  ["Brazil", 77], ["China", 78], ["France", 83],
  ["Germany", 96], ["Iran", 69], ["Italy", 71],
  ["Korea, South", 117], ["Russia", 82],
  ["Spain", 77], ["Turkey", 83], ["US", 61],
  ["United Kingdom", 134],
];

const Chevron = () => (
  <svg width="8" height="5" viewBox="0 0 8 5"><path d="M0 .5h8L4.700 4q-.7.600-1.400 0z" fill="#808495" /></svg>
);

export default function App() {
  return (
    <Window>
      <GlobalStyle />
      <TitleBar>
        <span />
        <Fit w={268}>app_sp · Streamlit - Mozilla Firefox</Fit>
        <WindowButtons>
          <svg width="12" height="12"><path d="M0 6.500h8" stroke="#eee" /></svg>
          <svg width="12" height="12"><path d="M2.500 2.500h7v7h-7z" stroke="#eee" fill="none" strokeWidth="1.200" /></svg>
          <svg width="12" height="12"><path d="M3 3l6 6M9 3l-6 6" stroke="#eee" /></svg>
        </WindowButtons>
      </TitleBar>

      <TabStrip>
        {tabs.map((t) => (
          <TabBox key={t.label} $active={t.active} $line={t.line}>
            {t.icon}
            <TabLabel $fade={t.fade}><Fit w={t.w}>{t.label}</Fit></TabLabel>
            <TabClose><Cross size={10} sw={1.7} color="#d6d7d6" /></TabClose>
          </TabBox>
        ))}
        <NewTab>
          <svg width="14" height="14"><path d="M7 0v14M0 7h14" stroke="#d9dad9" strokeWidth="1.800" /></svg>
        </NewTab>
      </TabStrip>

      <Toolbar>
        <Back>
          <Ic><path d="M15.500 8H1M7 1.800L.9 8 7 14.200" stroke="#929697" strokeWidth="1.700" /></Ic>
        </Back>
        <NavIcons>
          <Ic><path d="M.5 8H15M9 1.800L15.100 8 9 14.200" stroke="#8d9192" strokeWidth="1.700" /></Ic>
          <Ic>
            <path d="M13 4.800A6.200 6.200 0 1013.700 10" stroke={light} strokeWidth="2" />
            <path d="M15.200 1v6.500H8.700z" fill={light} />
          </Ic>
          <Ic>
            <path d="M.7 8.800L8 1.500l7.300 7.300M3 7.500V15h10V7.500M6.700 15v-4.500h2.600V15M12.500 1.500v4" stroke={light} strokeWidth="1.900" />
          </Ic>
        </NavIcons>
        <Field $w={746}>
          <Shield>
            <Ic s={15}>
              <path d="M8 1l6 1.300c0 6-1 10.200-6 12.700C3 12.500 2 8.300 2 2.300z" stroke="#b4b7b8" strokeWidth="1.700" />
              <path d="M8 4l3 .6c0 3.500-.6 5.900-3 7.400z" fill="#b4b7b8" />
            </Ic>
          </Shield>
          <Lock>
            <Ic>
              <path d="M2 7h12v8H2z" fill="#b4b7b8" />
              <path d="M4.800 7V4.500a3.200 3.200 0 016.400 0V7" stroke="#b4b7b8" strokeWidth="1.800" />
              <path d="M1.500 16L15.700 1.800" stroke="#232729" strokeWidth="1.500" />
              <path d="M1 15L15 1" stroke="#e22850" strokeWidth="2.300" />
            </Ic>
          </Lock>
          <Address><Fit w={147}><b>192.168.0.11</b>:5000</Fit></Address>
          <FieldIcons>
            <Ic><g fill="#b4b7b8"><circle cx="2" cy="8" r="1.900" /><circle cx="8" cy="8" r="1.900" /><circle cx="14" cy="8" r="1.900" /></g></Ic>
            <Ic>
              <path d="M1 2h14v5.500a7 6.800 0 01-14 0z" stroke="#b4b7b8" strokeWidth="1.700" strokeLinejoin="round" />
              <path d="M4.500 6L8 9.300 11.500 6" stroke="#b4b7b8" strokeWidth="1.800" />
            </Ic>
            <Ic><path d="M8 1.300l2.100 4.500 4.900.6-3.600 3.400.9 4.900L8 12.300l-4.300 2.400.9-4.900L1 6.400l4.900-.6z" stroke="#b4b7b8" strokeWidth="1.600" strokeLinejoin="round" /></Ic>
          </FieldIcons>
        </Field>
        <Field $w={298}>
          <SearchGlyph><Ic><circle cx="6" cy="6" r="4.900" stroke="#8f9495" strokeWidth="1.500" /><path d="M9.500 9.500l6 6" stroke="#8f9495" strokeWidth="1.900" /></Ic></SearchGlyph>
          <Fit w={54}>Search</Fit>
        </Field>
        <Extensions>
          <Ic><path d="M8 0v11M3 6.200L8 11.300l5-5.100M2 14.700h12" stroke={light} strokeWidth="1.900" /></Ic>
          <Ic><path d="M1.500 1v14M5 3v12M8.500 1v14M11 1.500L15 15" stroke={light} strokeWidth="1.900" /></Ic>
          <Ic>
            <rect x="1" y="2" width="14" height="12" rx="1.500" stroke={light} strokeWidth="1.900" />
            <path d="M8 2v12M3 5h3.500M3 7.500h3M3 10h2.500" stroke={light} strokeWidth="1.300" />
          </Ic>
          <Ic>
            <circle cx="8" cy="8" r="7.200" fill={light} />
            <circle cx="8" cy="5.800" r="2.900" fill="#515658" />
            <path d="M3 9.500c1 2 9 2 10 0-.5 4.500-9.500 4.500-10 0z" fill="#515658" />
          </Ic>
          <Ic>
            <g fill="#0b0c0c">
              <ellipse cx="12" cy="3.300" rx="3" ry="2.400" transform="rotate(-50 12 3.300)" />
              <ellipse cx="7.500" cy="3" rx="1.200" ry="1.800" /><ellipse cx="4.800" cy="4.300" rx="1" ry="1.500" /><ellipse cx="2.600" cy="6.500" rx=".9" ry="1.300" />
              <path d="M13.500 7.500C9 5 3.500 7 4 11c.5 4.500 6.500 6 7.500 2.500.5-2-1.500-2-2.500-2.500-.5-2 3.500-2 4.500-3.500z" />
            </g>
          </Ic>
          <Ic>
            <path d="M2.500 2L8 .8 13.500 2v6.500c0 3-2 5-5.500 7-3.500-2-5.500-4-5.500-7z" fill="#1d9a80" stroke="#7cc7b6" strokeWidth=".7" />
            <path d="M10.500 5c-1-1.500-2.500-.5-2.800 1.500L6.800 12M6 8.500h3.500M5.500 11.800h4.500" stroke="#fff" strokeWidth="1.200" />
          </Ic>
          <svg width="18" height="16" viewBox="0 0 18 16">
            <rect x="0" y="0" width="16" height="11" rx="1.500" fill="#0b0c0c" />
            <path d="M2 3.500h11M2 6h8" stroke="#676c6e" />
            <path d="M8 11v5M6 14h4" stroke="#0b0c0c" strokeWidth="1.300" />
          </svg>
        </Extensions>
        <Divider />
        <MenuSlot><svg width="14" height="14"><path d="M1 2.500h12M1 7h12M1 11.500h12" stroke={light} strokeWidth="2" /></svg></MenuSlot>
      </Toolbar>

      <Bookmarks>
        {marks.map((m, i) =>
          m ? (
            <Bookmark key={i} $w={m.w}>
              {m.icon}
              {m.label && <Fit w={m.w - 20}>{m.label}</Fit>}
            </Bookmark>
          ) : (
            <Bar key={i} />
          )
        )}
        <Overflow>
          <svg width="14" height="12"><path d="M1 0.500l5.500 5.500L1 11.500M7 .5l5.500 5.500L7 11.500" fill="none" stroke={light} strokeWidth="1.700" /></svg>
        </Overflow>
      </Bookmarks>
      <Rainbow />

      <Page>
        <Sidebar>
          <CloseRow><Cross size={16} sw={4.2} color="#bfc1c5" /></CloseRow>
          <Label><Fit w={117}>Scope of Analysis:</Fit></Label>
          <Select $top={9}><Value><Fit w={48}>World</Fit></Value><Chevron /></Select>
          <Label $top={25}><Fit w={87}>Visualisation:</Fit></Label>
          <Select $focus $top={8}><Value $caret><Fit w={35}>Map</Fit></Value><Chevron /></Select>
          <Label $top={24}><Fit w={128}>Choose the regions:</Fit></Label>
          <Multi>
            <SearchSlot>
              <svg width="11" height="11" viewBox="0 0 11 11"><circle cx="4.500" cy="4.700" r="3.600" stroke="#808495" fill="none" strokeWidth="1.400" /><path d="M7 7.300l3 3" stroke="#808495" strokeWidth="1.600" /></svg>
            </SearchSlot>
            <Tags>
              {regions.map(([name, w]) => (
                <Tag key={name} $w={w}>
                  <Fit w={w - 46}>{name}</Fit>
                  <Cross size={10} sw={1.6} color="#fff" />
                </Tag>
              ))}
            </Tags>
            <ClearSlot>
              <svg width="12" height="12" viewBox="0 0 12 12"><circle cx="6" cy="6" r="5.300" fill="#757a89" /><path d="M4 4l4 4M8 4l-4 4" stroke="#fff" strokeWidth="1.200" /></svg>
            </ClearSlot>
          </Multi>
          <Info $top={18} $side>
            <Line><Fit w={286}>Thanks to Tlse Data Engineering for</Fit></Line>
            <Line><Fit w={156}>the <a>original project</a>.</Fit></Line>
          </Info>
        </Sidebar>

        <Main>
          <Heading><Fit w={90}>Map plot</Fit></Heading>
          <WorldMap />
          <PageMenu>
            <svg width="18" height="16"><path d="M0 2h17M0 8h17M0 14h17" stroke="#262730" strokeWidth="2" /></svg>
          </PageMenu>
          <ChartMenu>
            <svg width="14" height="4"><g fill="#cfcfcf"><circle cx="2" cy="2" r="1.700" /><circle cx="7" cy="2" r="1.700" /><circle cx="12" cy="2" r="1.700" /></g></svg>
          </ChartMenu>
          <Content>
            <SliderRow>
              <Fit w={180}>Day in available range:</Fit>
              <Track><Thumb /></Track>
              <span>1</span>
            </SliderRow>
            <Info $top={28}>
              <Line>
                <Fit w={29}>by: </Fit>
                <Fit w={160}><a>R. Jimenez Sanchez</a></Fit>
                <Fit w={65}> | Code: </Fit>
                <Fit w={57}><a>GitHub</a></Fit>
                <Fit w={118}> | data source: </Fit>
                <Fit w={203}><a>victorvicpal/COVID19_es</a></Fit>
              </Line>
              <Line><Fit w={73}><a>(GitHub)</a>.</Fit></Line>
            </Info>
          </Content>
        </Main>
        <Scroll><ScrollThumb /></Scroll>
      </Page>
    </Window>
  );
}
